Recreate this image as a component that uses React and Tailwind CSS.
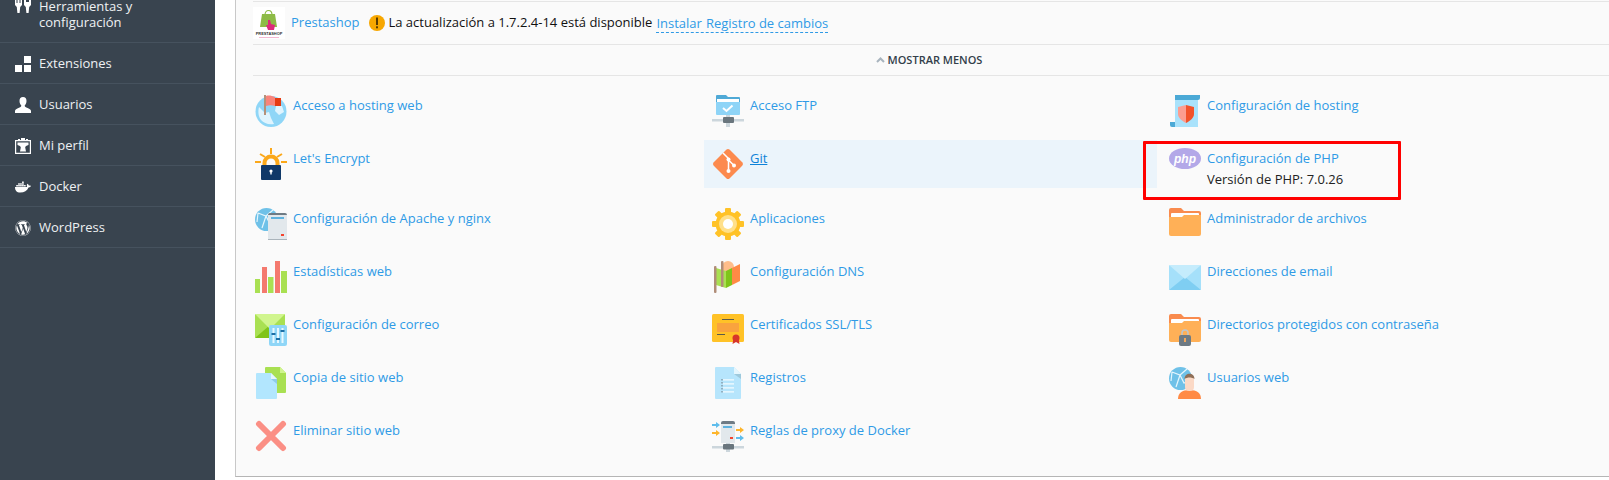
import React from 'react'
import { FaDocker, FaWordpress } from 'react-icons/fa'

const Svg = ({ children, size = 32, box = 32 }) => (
  <svg width={size} height={size} viewBox={`0 0 ${box} ${box}`} className="shrink-0 block">
    {children}
  </svg>
)

const Folder = () => (
  <>
    <path d="M0 2a2 2 0 0 1 2-2h10l3 3h15a2 2 0 0 1 2 2v6H0z" fill="#f98b4e" />
    <rect x="2" y="5" width="28" height="9" rx="1" fill="#fff" />
    <path d="M0 9h13l2-2h17v19a2 2 0 0 1-2 2H2a2 2 0 0 1-2-2z" fill="#ffb057" />
  </>
)

const WebGlobe = ({ fill = '#6fc1e8' }) => (
  <>
    <circle cx="11.5" cy="11.5" r="11.5" fill={fill} />
    <path d="M3 5l8 3 7-6M11 8l-4 12M11 8l4 8 7-2M3 5l-1 9" fill="none" stroke="#e6f6fd" strokeWidth="1.2" />
  </>
)

const ICONS = {
  hosting: (
    <Svg>
      <circle cx="16" cy="16.5" r="15.5" fill="#8fd6f7" />
      <path d="M4 12l6 6 4-1 2 6 3 6c-6 1-10-1-13-4-3-4-3-9-2-13zM21 11l6 0 2 6-5 3-4-4z" fill="#e0f4fe" />
      <rect x="9" y="0" width="2" height="20" fill="#b5917a" />
      <path d="M11 1c3-1 6 0 9 1v9c-3-1-6-1-9 0z" fill="#f9837a" />
      <path d="M20 3h6v8h-6z" fill="#e63b12" />
    </Svg>
  ),
  encrypt: (
    <Svg>
      <g stroke="#fba81a" strokeWidth="2" fill="none">
        <path d="M16 0v6M0 14h6M26 14h6M5 6l5 3M27 6l-5 3" />
        <path d="M9.5 18v-3a6.5 6.5 0 0 1 13 0v3" strokeWidth="4" />
      </g>
      <rect x="6" y="17" width="20" height="15" rx="1" fill="#0f3868" />
      <circle cx="16" cy="23" r="1.6" fill="#fff" />
      <rect x="15.3" y="23" width="1.4" height="3.5" fill="#fff" />
    </Svg>
  ),
  apache: (
    <Svg>
      <WebGlobe />
      <path d="M13 7a2 2 0 0 1 2-2h15a2 2 0 0 1 2 2v3H13z" fill="#6f7b84" />
      <rect x="13" y="7" width="19" height="25" fill="#e2e8ec" />
      <rect x="16" y="9" width="13" height="2" fill="#5fb2de" />
      <rect x="26" y="26" width="3" height="2" fill="#f4442e" />
      <rect x="13" y="31" width="19" height="1" fill="#aab4bb" />
    </Svg>
  ),
  stats: (
    <Svg>
      <rect x="0" y="18" width="5" height="14" fill="#a9e052" />
      <rect x="7" y="6" width="5" height="26" fill="#f4796e" />
      <rect x="13" y="16" width="5.5" height="16" fill="#a9e052" />
      <rect x="20" y="0" width="5" height="32" fill="#f4796e" />
      <rect x="26" y="10" width="6" height="22" fill="#a9e052" />
    </Svg>
  ),
  mailcfg: (
    <Svg>
      <rect x="0" y="0" width="30" height="24" rx="1" fill="#a9e052" />
      <path d="M0 24l15-13 15 13z" fill="#7fc41a" />
      <path d="M0 0h30L15 15z" fill="#d0f58e" />
      <rect x="14" y="11" width="18" height="21" rx="2" fill="#8fd6f7" />
      <g fill="#e8f8ff">
        <rect x="17.5" y="14" width="2" height="15" />
        <rect x="22" y="14" width="2" height="15" />
        <rect x="26.5" y="14" width="2" height="15" />
      </g>
      <g fill="#1c6fa6">
        <rect x="16.5" y="19" width="4" height="2" />
        <rect x="21" y="24" width="4" height="2" />
        <rect x="25.5" y="16" width="4" height="2" />
      </g>
    </Svg>
  ),
  copy: (
    <Svg>
      <path d="M11 0h14l6 6v19a1 1 0 0 1-1 1H11a1 1 0 0 1-1-1V1a1 1 0 0 1 1-1z" fill="#a9e052" />
      <path d="M25 0l6 6h-6z" fill="#d0f58e" />
      <path d="M2 6h14l6 6v19a1 1 0 0 1-1 1H2a1 1 0 0 1-1-1V7a1 1 0 0 1 1-1z" fill="#b2e6fe" />
      <path d="M16 6l6 6h-6z" fill="#e4f6fe" />
      <path d="M16 12h6v5z" fill="#8fcbe8" />
    </Svg>
  ),
  remove: (
    <Svg>
      <path d="M4 4l24 24M28 4L4 28" stroke="#fb8f85" strokeWidth="6" strokeLinecap="round" />
    </Svg>
  ),
  ftp: (
    <Svg>
      <path d="M4 1a1 1 0 0 1 1-1h9l2 2h11a1 1 0 0 1 1 1v4H4z" fill="#4fa9d6" />
      <rect x="5" y="4" width="22" height="3" fill="#fff" />
      <path d="M4 7h24v12a1 1 0 0 1-1 1H5a1 1 0 0 1-1-1z" fill="#8ed4f7" />
      <path d="M11 13l3.5 3 6-5.5" stroke="#fff" strokeWidth="2" fill="none" />
      <rect x="0" y="24" width="32" height="2.5" fill="#ccd6dc" />
      <rect x="14" y="20" width="4" height="12" fill="#ccd6dc" />
      <rect x="11" y="22" width="11" height="6" rx="1" fill="#69757d" />
    </Svg>
  ),
  git: (
    <Svg>
      <rect x="4.7" y="4.7" width="22.6" height="22.6" rx="2.5" transform="rotate(45 16 16)" fill="#fc8a4e" />
      <path d="M11 5l5.5 5.5v11M16.5 12l5.5 5.5" stroke="#fff" strokeWidth="1.5" fill="none" />
      <circle cx="16.5" cy="11.5" r="2" fill="#fff" />
      <circle cx="16.5" cy="23" r="2" fill="#fff" />
      <circle cx="22" cy="17.5" r="2" fill="#fff" />
    </Svg>
  ),
  apps: (
    <Svg>
      <g fill="#ffc227">
        <circle cx="16" cy="16" r="12.5" />
        {[0, 45, 90, 135, 180, 225, 270, 315].map((a) => (
          <rect key={a} x="13" y="0" width="6" height="6" rx="1" transform={`rotate(${a} 16 16)`} />
        ))}
      </g>
      <circle cx="16" cy="16" r="9" fill="#ffe08a" />
      <circle cx="16" cy="16" r="5" fill="#fff" />
    </Svg>
  ),
  dns: (
    <Svg>
      <circle cx="16" cy="6" r="6" fill="#ffbd8a" />
      <path d="M4 7l10 3v17L4 24z" fill="#a9e052" />
      <path d="M14 10l6-3v17l-6 3z" fill="#7fc41a" />
      <path d="M20 7l8-4v17l-8 4z" fill="#ff8a45" />
      <rect x="2" y="5" width="2.5" height="27" rx="1" fill="#b08d78" />
      <rect x="9" y="0" width="2.5" height="26" rx="1" fill="#b08d78" />
    </Svg>
  ),
  ssl: (
    <Svg>
      <rect x="0" y="0" width="32" height="28" rx="1.5" fill="#ffc227" />
      <rect x="5" y="9" width="22" height="9" fill="#f9a33e" />
      <rect x="10" y="5" width="12" height="1" fill="#5c5a4a" />
      <rect x="5" y="20" width="8" height="1" fill="#5c5a4a" />
      <path d="M21.5 24l-1 6 3.5-2 3.500 2-1-6z" fill="#d8352a" />
      <circle cx="24" cy="24" r="3.500" fill="#d8352a" />
    </Svg>
  ),
  logs: (
    <Svg>
      <path d="M4 0h18l7 7v24a1 1 0 0 1-1 1H4a1 1 0 0 1-1-1V1a1 1 0 0 1 1-1z" fill="#b6e5fc" />
      <path d="M22 0l7 7h-7z" fill="#e4f6fe" />
      <path d="M22 7h7v5z" fill="#9ec9dc" />
      <g fill="#e4f6fe">
        <rect x="11" y="12" width="11" height="1.700" />
        <rect x="11" y="16" width="11" height="1.700" />
        <rect x="11" y="20" width="11" height="1.700" />
        <rect x="11" y="24" width="11" height="1.700" />
      </g>
      <path d="M10 12v14" stroke="#6f7b84" strokeWidth="1" strokeDasharray="1.500 1.500" />
    </Svg>
  ),
  proxy: (
    <Svg>
      <rect x="0" y="26" width="32" height="2.500" fill="#ccd6dc" />
      <rect x="14" y="22" width="4" height="10" fill="#ccd6dc" />
      <rect x="11" y="24" width="11" height="5.500" rx="1" fill="#69757d" />
      <path d="M9 3a2 2 0 0 1 2-2h10a2 2 0 0 1 2 2v2H9z" fill="#6f7b84" />
      <rect x="9" y="4" width="14" height="19" fill="#e2e8ec" />
      <rect x="11" y="6" width="9" height="2" fill="#5fb2de" />
      <rect x="18" y="17" width="3" height="2" fill="#f4442e" />
      <g fill="#5fbdec">
        <path d="M0 4h4V2l4 3-4 3V6H0z" />
        <path d="M24 17h4v-2l4 3-4 3v-2h-4z" />
      </g>
      <g fill="#fdb52b">
        <path d="M0 12h4v-2l4 3-4 3v-2H0z" />
        <path d="M24 9h4V7l4 3-4 3v-2h-4z" />
      </g>
    </Svg>
  ),
  hostcfg: (
    <Svg>
      <path d="M6 3h23v29H1c3 0 5-1 5-3z" fill="#a9e2fb" />
      <path d="M1 27h5v5H3a2 2 0 0 1-2-2z" fill="#4ba9d6" />
      <path d="M6 0h25v3a2 2 0 0 1-2 2H6z" fill="#4ba9d6" />
      <path d="M17 10l8 2v7c0 4-4 7-8 9z" fill="#f2522a" />
      <path d="M17 10l-8 2v7c0 4 4 7 8 9z" fill="#fc9d90" />
    </Svg>
  ),
  php: (
    <Svg>
      <ellipse cx="16" cy="10.500" rx="16" ry="10.500" fill="#b3a8e8" />
      <text x="16" y="14.500" textAnchor="middle" fontFamily="'Liberation Sans', sans-serif" fontStyle="italic" fontWeight="700" fontSize="12" fill="#fff">php</text>
    </Svg>
  ),
  files: (
    <Svg>
      <Folder />
    </Svg>
  ),
  email: (
    <Svg>
      <rect x="0" y="4" width="32" height="25" rx="1" fill="#a5e0fa" />
      <path d="M0 29l16-13 16 13z" fill="#7fcef2" />
      <path d="M0 4h32L16 18z" fill="#c5ecfc" />
    </Svg>
  ),
  protect: (
    <Svg>
      <Folder />
      <path d="M13 21v-2a3 3 0 0 1 6 0v2" stroke="#bfc6cb" strokeWidth="1.500" fill="none" />
      <rect x="10" y="21" width="12" height="11" rx="2" fill="#6d7a84" />
      <rect x="15" y="24" width="2" height="4" fill="#f2a65a" />
    </Svg>
  ),
  webusers: (
    <Svg>
      <WebGlobe />
      <path d="M9 32c0-6 4-9 11.500-9S32 26 32 32z" fill="#ff8a45" />
      <rect x="16" y="8" width="9" height="16" rx="4" fill="#fbd9c6" />
      <path d="M15.500 12c0-7 10-7 10 0-3-2-7-2-10 0z" fill="#8f6f58" />
    </Svg>
  ),
}

const ToolsIcon = () => (
  <svg width="16" height="16" viewBox="0 0 16 16" className="shrink-0 -mt-px" fill="#fff">
    <path d="M0 0h1.500v6h1V0h2v6h1V0H7v8L5.200 10l-.6 6H2.400l-.6-6L0 8z" />
    <path d="M9 0h2v5h3V0h2v8l-1.800 2-.6 6h-2.200l-.6-6L9 8z" />
  </svg>
)

const ExtIcon = () => (
  <svg width="16" height="16" viewBox="0 0 16 16" className="shrink-0" fill="#fff">
    <rect x="9" y="0" width="7" height="7" />
    <rect x="0" y="9" width="7" height="7" />
    <rect x="9" y="9" width="7" height="7" />
  </svg>
)

const UserIcon = () => (
  <svg width="16" height="16" viewBox="0 0 16 16" className="shrink-0" fill="#fff">
    <path d="M8 0c2.300 0 3.500 1.500 3.500 4 0 2-1 3.500-1.800 4.500 0 1 .6 1.500 2.300 2.200 2.400.9 4 1.700 4 3.300v2H0v-2c0-1.600 1.600-2.400 4-3.300 1.700-.7 2.300-1.200 2.300-2.200C5.500 7.500 4.500 6 4.500 4 4.500 1.500 5.700 0 8 0z" />
  </svg>
)

const ProfileIcon = () => (
  <svg width="16" height="16" viewBox="0 0 16 16" className="shrink-0" fill="#fff">
    <path fillRule="evenodd" d="M0 2h3V1h2v1h1V0h4v2h1V1h2v1h3v14H0zm1.200 1.200v11.600h13.600V3.200z" />
    <path d="M2.500 4.500h11V7c-2 .6-3.300 1.200-3.300 2.500l.8 4H5l.8-4C5.800 8.200 4.500 7.600 2.500 7z" />
  </svg>
)

const sideItems = [
  { label: 'Extensiones', icon: <ExtIcon /> },
  { label: 'Usuarios', icon: <UserIcon /> },
  { label: 'Mi perfil', icon: <ProfileIcon /> },
  { label: 'Docker', icon: <FaDocker className="w-4 h-4 shrink-0 text-white" /> },
  { label: 'WordPress', icon: <FaWordpress className="w-4 h-4 shrink-0 text-white" /> },
]

const tools = [
  { icon: 'hosting', label: 'Acceso a hosting web' },
  { icon: 'ftp', label: 'Acceso FTP' },
  { icon: 'hostcfg', label: 'Configuración de hosting' },
  { icon: 'encrypt', label: "Let's Encrypt" },
  { icon: 'git', label: 'Git', active: true },
  { icon: 'php', label: 'Configuración de PHP', meta: 'Versión de PHP: 7.0.26', marked: true },
  { icon: 'apache', label: 'Configuración de Apache y nginx' },
  { icon: 'apps', label: 'Aplicaciones' },
  { icon: 'files', label: 'Administrador de archivos' },
  { icon: 'stats', label: 'Estadísticas web' },
  { icon: 'dns', label: 'Configuración DNS' },
  { icon: 'email', label: 'Direcciones de email' },
  { icon: 'mailcfg', label: 'Configuración de correo' },
  { icon: 'ssl', label: 'Certificados SSL/TLS' },
  { icon: 'protect', label: 'Directorios protegidos con contraseña' },
  { icon: 'copy', label: 'Copia de sitio web' },
  { icon: 'logs', label: 'Registros' },
  { icon: 'webusers', label: 'Usuarios web' },
  { icon: 'remove', label: 'Eliminar sitio web' },
  { icon: 'proxy', label: 'Reglas de proxy de Docker' },
]

const Tool = ({ icon, label, meta, active, marked }) => (
  <div className={['relative flex items-start gap-[6px] p-2 min-h-[48px]', active ? 'bg-[#ebf4fb]' : ''].join(' ')}>
    {ICONS[icon]}
    <div className="pt-[2px]">
      <a className={active ? 'block leading-4 text-[#0e82d8] underline' : 'block leading-4 text-[#2f9ae6]'}>{label}</a>
      {meta && <div className="mt-[5px] leading-4 text-[#222]">{meta}</div>}
    </div>
    {/* red annotation drawn over the screenshot */}
    {marked && (
      <div className="absolute left-[-18px] top-[1px] w-[258px] h-[59px] border-[3px] border-[#ff0000] rounded-[1px] pointer-events-none" />
    )}
  </div>
)

const PrestaLogo = () => (
  <svg width="32" height="32" viewBox="0 0 32 32" className="shrink-0 block bg-white">
    <path d="M9 7h13l2 13H7z" fill="#8dbb46" />
    <path d="M12 8c0-6 7-6 7 0" stroke="#8dbb46" strokeWidth="1.200" fill="none" />
    <path d="M15 13l2 0 1 4 4 1-1 5h-6l-2-5 2 0z" fill="#dd2a7b" />
    <text x="16" y="28" textAnchor="middle" fontFamily="'Liberation Sans', sans-serif" fontWeight="700" fontSize="3.900" fill="#333">PRESTASHOP</text>
    <rect x="6" y="30" width="20" height="1" fill="#f4b9d2" />
  </svg>
)

const WarnIcon = () => (
  <svg width="16" height="16" viewBox="0 0 16 16" className="shrink-0">
    <circle cx="8" cy="8" r="8" fill="#f7a700" />
    <rect x="7" y="2.500" width="2" height="7.500" fill="#5a3b00" />
    <rect x="7" y="11.300" width="2" height="2" fill="#5a3b00" />
  </svg>
)

export default function App() {
  return (
    <div className="flex h-[480px] overflow-hidden bg-white font-['Open_Sans',sans-serif] text-[13px]">
      <aside className="w-[215px] shrink-0 bg-[#39444f] text-[#eef1f3] overflow-hidden">
        <div className="flex items-start gap-2 -mt-[14px] pl-[15px] py-3 border-b border-[#46525e]">
          <ToolsIcon />
          <span className="leading-4">Herramientas y<br />configuración</span>
        </div>
        {sideItems.map((item) => (
          <div key={item.label} className="flex items-center gap-2 h-[41px] pl-[15px] pt-px border-b border-[#46525e]">
            {item.icon}
            <span>{item.label}</span>
          </div>
        ))}
      </aside>

      <main className="ml-5 flex-1 min-w-0 h-[477px] bg-[#fafafa] border-l border-b border-l-[#c8c8c8] border-b-[#b5b5b5] pl-[17px] overflow-hidden">
        <div className="mt-px h-[43px] border-t border-[#e5e5e5] flex items-center">
          <PrestaLogo />
          <a className="ml-[6px] text-[#2f9ae6]">Prestashop</a>
          <span className="ml-[10px]"><WarnIcon /></span>
          <span className="ml-[3px] text-[#111]">La actualización a 1.7.2.4-14 está disponible</span>
          <span className="ml-1 flex gap-1 text-[#2f9ae6] border-b border-dashed border-[#2f9ae6] leading-[18px]">
            <a>Instalar</a>
            <a>Registro de cambios</a>
          </span>
        </div>
        <div className="h-[32px] border-y border-[#e5e5e5] flex items-center justify-center gap-[3px] pr-[4px]">
          <svg width="9" height="6" viewBox="0 0 9 6" className="shrink-0">
            <path d="M1 5l3.500-3.500L8 5" stroke="#a8b4be" strokeWidth="2" fill="none" />
          </svg>
          <span className="text-[11px] font-semibold text-[#333f4a]">MOSTRAR MENOS</span>
        </div>
        <div className="-ml-[6px] pt-[11px] grid grid-cols-[repeat(3,453px)] gap-x-1 gap-y-[5px] items-start">
          {tools.map((t) => (
            <Tool key={t.label} {...t} />
          ))}
        </div>
      </main>
    </div>
  )
}
